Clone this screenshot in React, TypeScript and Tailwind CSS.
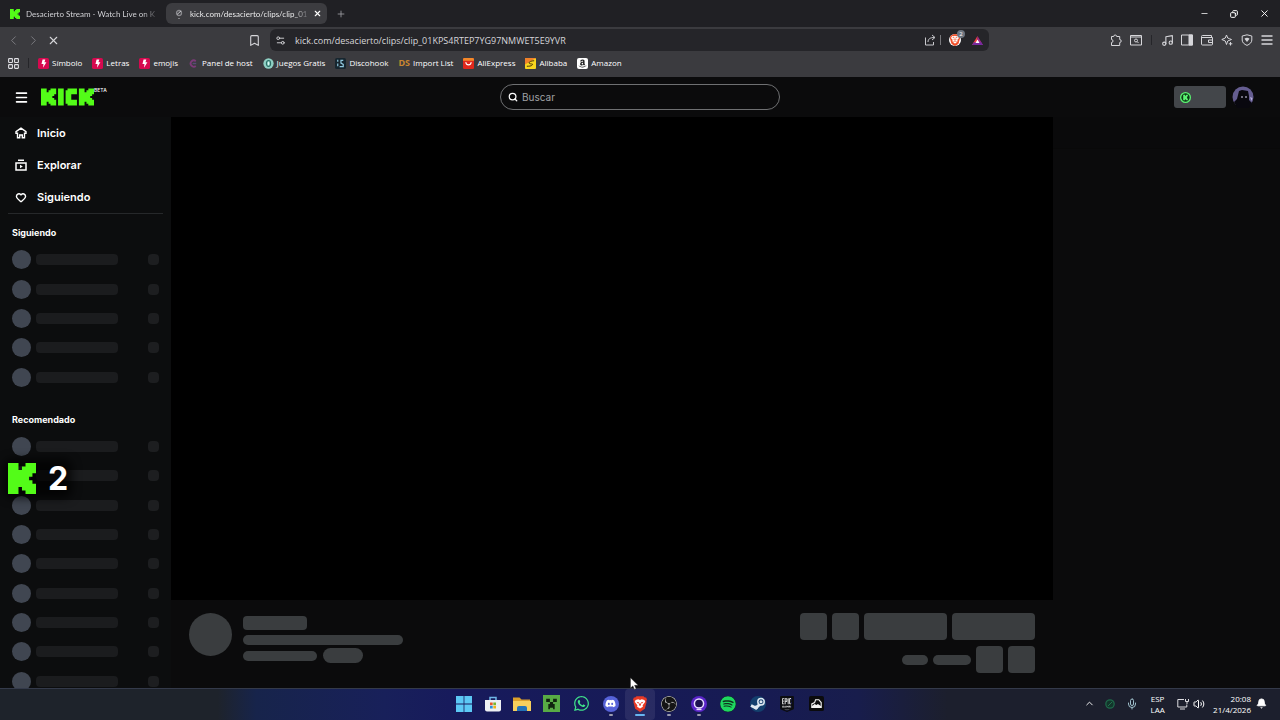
import React from 'react'
import {
    Bell,
    Bookmark,
    ChevronLeft,
    ChevronRight,
    ChevronUp,
    Copy,
    Heart,
    LayoutGrid,
    Menu,
    Mic,
    Minus,
    Music,
    Plus,
    Search,
    Settings2,
    Volume2,
    X,
} from 'lucide-react'
import { FaAmazon, FaDiscord, FaSpotify, FaWhatsapp } from 'react-icons/fa'
import { SiBrave, SiEpicgames, SiObsstudio } from 'react-icons/si'

interface Item {
    label: string
    icon: React.ReactNode
}

interface TaskItem extends Item {
    running?: boolean
    active?: boolean
}

const KickMark = ({ className }: { className: string }) => (
    <svg viewBox="0 0 267 300" preserveAspectRatio="none" className={className}>
        <path
            fill="#53fc18"
            d="M0 0H100V67H133V33H167V0H267V100H233V133H200V167H233V200H267V300H167V267H133V233H100V300H0Z"
        />
    </svg>
)

const KickLogo = () => (
    <svg viewBox="0 0 933 300" className="h-[18px] w-[53px]" fill="#53fc18">
        <path d="M0 0H100V67H133V33H167V0H267V100H233V133H200V167H233V200H267V300H167V267H133V233H100V300H0Z" />
        <path d="M300 0H400V300H300Z" />
        <path d="M433 33H467V0H633V100H533V200H633V300H467V267H433Z" />
        <path d="M667 0H767V67H800V33H833V0H933V100H900V133H867V167H900V200H933V300H833V267H800V233H767V300H667Z" />
    </svg>
)

const BoltIcon = () => (
    <svg viewBox="0 0 12 12" className="size-[11px]">
        <rect width="12" height="12" rx="2" fill="#d6094f" />
        <path d="M5 1.5h3L7 4.6h2.2L5.4 10.6l.6-4H3.8z" fill="#fff" />
    </svg>
)

const bookmarks: Item[] = [
    { label: 'Símbolo', icon: <BoltIcon /> },
    { label: 'Letras', icon: <BoltIcon /> },
    { label: 'emojis', icon: <BoltIcon /> },
    {
        label: 'Panel de host',
        icon: (
            <svg viewBox="0 0 12 12" className="size-[11px]" fill="none">
                <path d="M8.5 3.5A3.4 3.4 0 1 0 8.5 8.7" stroke="#7c3a78" strokeWidth="2" />
                <path d="M5 6h4" stroke="#5a4a78" strokeWidth="1.5" />
            </svg>
        ),
    },
    {
        label: 'Juegos Gratis',
        icon: (
            <svg viewBox="0 0 12 12" className="size-[11px]">
                <circle cx="6" cy="6" r="5.6" fill="#8fd0c4" />
                <ellipse cx="6" cy="6" rx="2.3" ry="3.2" fill="none" stroke="#2b6e66" strokeWidth="1.2" />
                <path d="M6 4.5v3" stroke="#eafffb" />
            </svg>
        ),
    },
    {
        label: 'Discohook',
        icon: (
            <svg viewBox="0 0 12 12" className="size-[11px]" fill="none">
                <rect width="12" height="12" rx="2" fill="#17262f" />
                <path d="M9 2.5H6.5v3L9 7v2.5H5M3 2v2M3 6v3" stroke="#8fc7dd" strokeWidth="1.3" />
            </svg>
        ),
    },
    {
        label: 'Import List',
        icon: <span className="text-[9px] font-bold leading-3 text-[#c98730]">DS</span>,
    },
    {
        label: 'AliExpress',
        icon: (
            <svg viewBox="0 0 12 12" className="size-[11px]">
                <rect width="12" height="12" rx="1.5" fill="#e0281c" />
                <path d="M0 1.5A1.5 1.5 0 0 1 1.5 0h9A1.5 1.5 0 0 1 12 1.5V3H0z" fill="#f4892a" />
                <path d="M3 4.5c.6 4 5.4 4 6 0" fill="none" stroke="#fff" strokeWidth="1.1" />
            </svg>
        ),
    },
    {
        label: 'Alibaba',
        icon: (
            <svg viewBox="0 0 12 12" className="size-[11px]">
                <rect width="12" height="12" rx="1" fill="#f7d51e" />
                <path d="M0 0h12L0 7z" fill="#f0812a" />
                <path d="M10 3C6 3 3 5 5 6s4 0 3 1.5S4 9 2 9" fill="none" stroke="#3a2508" />
            </svg>
        ),
    },
    {
        label: 'Amazon',
        icon: (
            <span className="flex size-[11px] items-center justify-center rounded-[2px] bg-white">
                <FaAmazon className="size-[9px] text-[#232323]" />
            </span>
        ),
    },
]

const navItems: Item[] = [
    {
        label: 'Inicio',
        icon: (
            <svg viewBox="0 0 12 12" className="size-3" fill="none" stroke="#fff" strokeWidth="1.4">
                <path d="M6 1.2L1 4.6v1.6h1.5v4.6h2.2V8h2.6v2.8h2.2V6.2H11V4.6z" />
            </svg>
        ),
    },
    {
        label: 'Explorar',
        icon: (
            <svg viewBox="0 0 12 12" className="size-3" fill="none" stroke="#fff" strokeWidth="1.5">
                <path d="M1 4h10v7H1zM3 1.2h6" />
                <path d="M5 5.8v3.4l2.8-1.7z" fill="#fff" stroke="none" />
            </svg>
        ),
    },
    { label: 'Siguiendo', icon: <Heart className="h-[11px] w-3" strokeWidth={3} /> },
]

const taskItems: TaskItem[] = [
    {
        label: 'Inicio de Windows',
        icon: (
            <svg viewBox="0 0 16 16" className="size-4" fill="#5cc8f5">
                <path d="M0 0h7.6v7.6H0zM8.4 0H16v7.6H8.4zM0 8.4h7.6V16H0zM8.4 8.4H16V16H8.4z" />
            </svg>
        ),
    },
    {
        label: 'Microsoft Store',
        icon: (
            <svg viewBox="0 0 16 16" className="size-4">
                <path d="M5 4V1.5h6V4" fill="none" stroke="#6fb6e8" strokeWidth="1.5" />
                <path d="M0 4h16v9.5a2 2 0 0 1-2 2H2a2 2 0 0 1-2-2z" fill="#eef0f3" />
                <path d="M5 6.5h2.7v2.7H5z" fill="#e8562a" />
                <path d="M8.3 6.5H11v2.7H8.3z" fill="#7ab530" />
                <path d="M5 9.8h2.7v2.7H5z" fill="#2c8fd8" />
                <path d="M8.3 9.8H11v2.7H8.3z" fill="#f0b41c" />
            </svg>
        ),
    },
    {
        label: 'Explorador de archivos',
        icon: (
            <svg viewBox="0 0 18 16" className="h-4 w-[18px]">
                <path d="M0 1.5h6.5l2 2H17V15H0z" fill="#dba02a" />
                <path d="M0 5h18v10H0z" fill="#f6cf5c" />
                <path d="M4 15v-3a2 2 0 0 1 2-2h6a2 2 0 0 1 2 2v3z" fill="#2272b8" />
            </svg>
        ),
    },
    {
        label: 'Minecraft',
        icon: (
            <svg viewBox="0 0 16 16" className="size-[17px]">
                <path d="M0 0h16v16H0z" fill="#58ab45" />
                <path
                    d="M3 3.5h3.5v3H3zM9.5 3.5H13v3H9.5zM6.5 6.5h3v2H11v5H9.5V12h-3v1.5H5v-5h1.5z"
                    fill="#10240f"
                />
            </svg>
        ),
    },
    { label: 'WhatsApp', icon: <FaWhatsapp className="size-[17px] text-[#3fe08a]" /> },
    {
        label: 'Discord',
        running: true,
        icon: (
            <span className="flex size-4 items-center justify-center rounded-full bg-[#5662d8]">
                <FaDiscord className="size-[11px] text-white" />
            </span>
        ),
    },
    {
        label: 'Brave',
        running: true,
        active: true,
        icon: (
            <svg viewBox="0 0 16 18" className="h-4 w-[14px]">
                <path
                    d="M4 0h8l1.5 1.7 1.5-.2 1 2.500-.8 1.500.3 1.500-2 7.500L8 18l-5.500-3.500L.5 7l.3-1.500L0 4l1-2.500 1.500.2z"
                    fill="#e83a26"
                />
                <path d="M3 4.500l3-.8 2 .6 2-.6 3 .8 1 2-3 4 .3 1.500L8 14l-3.300-2 .3-1.500-3-4z" fill="#fff" />
                <path
                    d="M4 6.500l3 .8-1 1.500zM12 6.500l-3 .8 1 1.500zM7.300 8h1.400l.5 2.500L8 11l-1.200-.5z"
                    fill="#e83a26"
                />
            </svg>
        ),
    },
    {
        label: 'OBS Studio',
        running: true,
        icon: <SiObsstudio className="size-4 rounded-full bg-[#151515] text-[#c9c9c9]" />,
    },
    {
        label: 'Grabador',
        running: true,
        icon: (
            <svg viewBox="0 0 16 16" className="size-4" fill="none">
                <circle cx="8" cy="8" r="8" fill="#5a24c8" />
                <circle cx="8" cy="7.5" r="4.6" fill="#1b1150" stroke="#e6dcff" strokeWidth="1.5" />
                <path d="M5.5 13.5h5" stroke="#e6dcff" strokeWidth="1.3" />
            </svg>
        ),
    },
    {
        label: 'Spotify',
        icon: <FaSpotify className="size-4 rounded-full bg-[#10331d] text-[#1ed760]" />,
    },
    {
        label: 'Steam',
        icon: (
            <svg viewBox="0 0 16 16" className="size-4">
                <circle cx="8" cy="8" r="8" fill="#14406e" />
                <path d="M1 9.5l5 2.5 5-5" fill="none" stroke="#dfe9f2" strokeWidth="3" />
                <circle cx="11" cy="5.8" r="3.2" fill="#14406e" stroke="#dfe9f2" strokeWidth="1.5" />
                <circle cx="11" cy="5.8" r="1.5" fill="#dfe9f2" />
                <circle cx="6" cy="11.5" r="2" fill="#dfe9f2" />
            </svg>
        ),
    },
    {
        label: 'Epic Games',
        icon: (
            <span className="flex h-3 w-[9px] items-center justify-center bg-[#e4e4e4]">
                <SiEpicgames className="size-4 shrink-0 text-[#0c0d10]" />
            </span>
        ),
    },
    {
        label: 'Launcher',
        icon: (
            <svg viewBox="0 0 16 16" className="size-[15px]" fill="none">
                <rect width="16" height="16" rx="2" fill="#0b0b0d" />
                <path d="M3 12.2V8.500L6 7l1-3h3.500L13 7v5.200z" stroke="#f2f2f2" strokeWidth="1.2" />
                <path d="M3 12.500V11l3-2.500 2 1 1.500-1L13 11v1.500z" fill="#f2f2f2" />
            </svg>
        ),
    },
]

const IconButton = ({
    label,
    children,
    className = '',
}: {
    label: string
    children: React.ReactNode
    className?: string
}) => (
    <button
        type="button"
        aria-label={label}
        className={`flex h-5 w-5 shrink-0 items-center justify-center ${className}`}
    >
        {children}
    </button>
)

const TabStrip = () => (
    <div className="flex h-[27px] shrink-0 items-center bg-[#202024]">
        <div className="flex w-[160px] items-center gap-[6px] pl-[10px]">
            <KickMark className="h-[10px] w-[10px] shrink-0" />
            <span className="whitespace-nowrap bg-linear-to-r from-[#e0e0e4] from-90% to-[#55555a] bg-clip-text font-[Lato,sans-serif] text-[8px] leading-3 text-transparent">
                Desacierto Stream - Watch Live on K
            </span>
        </div>
        <div className="ml-[6px] flex h-[21px] w-[161px] items-center rounded-md bg-[#3c3c40] pl-2">
            <svg viewBox="0 0 10 12" className="h-3 w-[10px] shrink-0" fill="none">
                <circle cx="5" cy="5" r="2.5" stroke="#8a8a8e" strokeWidth="1.3" />
                <path d="M3 6.5L7 3M4.5 10.5h1" stroke="#c4c4c8" />
            </svg>
            <span className="ml-[6px] whitespace-nowrap bg-linear-to-r from-white from-90% to-[#66666a] bg-clip-text font-[Lato,sans-serif] text-[8px] leading-3 text-transparent">
                kick.com/desacierto/clips/clip_01
            </span>
            <IconButton label="Cerrar pestaña" className="ml-auto">
                <X className="size-[9px]" strokeWidth={3} />
            </IconButton>
        </div>
        <IconButton label="Nueva pestaña" className="ml-1 text-[#a0a0a4]">
            <Plus className="size-[10px]" />
        </IconButton>
        <div className="ml-auto flex gap-[10px] pr-[6px]">
            <IconButton label="Minimizar">
                <Minus className="size-[9px]" />
            </IconButton>
            <IconButton label="Restaurar">
                <Copy className="size-[8px] rotate-90" strokeWidth={3} />
            </IconButton>
            <IconButton label="Cerrar">
                <X className="size-[11px]" />
            </IconButton>
        </div>
    </div>
)

const Toolbar = () => (
    <div className="flex h-[26px] shrink-0 items-center text-[#d6d6da]">
        <div className="flex w-[270px] shrink-0 pl-[3px] pr-[6px]">
            <IconButton label="Atrás" className="text-[#7d7d82]">
                <ChevronLeft className="size-[15px]" strokeWidth={1.5} />
            </IconButton>
            <IconButton label="Adelante" className="text-[#7d7d82]">
                <ChevronRight className="size-[15px]" strokeWidth={1.5} />
            </IconButton>
            <IconButton label="Detener">
                <X className="size-[13px]" />
            </IconButton>
            <IconButton label="Guardar marcador" className="ml-auto">
                <Bookmark className="size-[13px]" />
            </IconButton>
        </div>
        <div className="flex h-[22px] min-w-0 flex-1 items-center rounded-md bg-[#252529] pr-[2px]">
            <IconButton label="Información del sitio">
                <Settings2 className="size-[11px]" />
            </IconButton>
            <input
                type="text"
                aria-label="Dirección"
                defaultValue="kick.com/desacierto/clips/clip_01KPS4RTEP7YG97NMWET5E9YVR"
                className="ml-[5px] h-5 min-w-0 flex-1 bg-transparent text-[9px] outline-none"
            />
            <IconButton label="Compartir">
                <svg viewBox="0 0 12 12" className="size-3" fill="none" stroke="#c8c8cc">
                    <path d="M1.5 3.500v7.500h8V8M4 8c0-3 2-4.500 6.500-4.500M8 1l3 2.500L8 6" />
                </svg>
            </IconButton>
            <span className="h-[10px] w-px bg-[#77777b]" />
            <button
                type="button"
                aria-label="Brave Shields"
                className="relative ml-1 flex size-5 items-center justify-center"
            >
                <SiBrave className="size-3 rounded-full bg-white text-[#f0502a]" />
                <span className="absolute right-0 top-0 size-2 rounded-full bg-[#6d7580] text-center text-[6px] leading-2 text-white">
                    2
                </span>
            </button>
            <IconButton label="Brave Rewards" className="ml-[2px]">
                <svg viewBox="0 0 12 12" className="size-[11px]">
                    <path d="M6 1L0 11h6z" fill="#f0413f" />
                    <path d="M6 1l6 10H6z" fill="#a3268f" />
                    <path d="M0 11h12L10 8H2z" fill="#762a9e" />
                    <path d="M6 5L3.8 8.800h4.400z" fill="#fff" />
                </svg>
            </IconButton>
        </div>
        <div className="flex w-[291px] shrink-0 items-center justify-end pr-[3px]">
            <IconButton label="Extensiones">
                <svg viewBox="0 0 12 12" className="size-3" fill="none" stroke="currentColor">
                    <path d="M1.500 2.500h2.200a1.500 1.500 0 0 1 3 0h3v3a1.500 1.500 0 0 1 0 3V11.500H1.500v-3a1.500 1.500 0 0 0 0-3z" />
                </svg>
            </IconButton>
            <IconButton label="Buscar pestañas">
                <svg viewBox="0 0 12 12" className="size-3" fill="none" stroke="currentColor">
                    <path d="M.5 1.500h11v9.500H.5zM.5 3h11" />
                    <circle cx="6" cy="6.5" r="1.5" />
                    <path d="M7 7.500l1.500 1.500" />
                </svg>
            </IconButton>
            <span className="mx-[5px] h-[10px] w-px bg-[#252529]" />
            <IconButton label="Medios">
                <Music className="size-[13px]" />
            </IconButton>
            <IconButton label="Barra lateral">
                <svg viewBox="0 0 12 12" className="size-3" fill="none" stroke="currentColor">
                    <path d="M.5 1h11v10H.5z" />
                    <path d="M8 1h3.500v10H8z" fill="currentColor" />
                </svg>
            </IconButton>
            <IconButton label="Cartera">
                <svg viewBox="0 0 12 12" className="size-3" fill="none" stroke="currentColor">
                    <path d="M10.500 3.500v-2h-9a1 1 0 0 0-1 1V10a1 1 0 0 0 1 1h9a1 1 0 0 0 1-1V3.500H.5M11.500 6h-4v2.500h4" />
                </svg>
            </IconButton>
            <IconButton label="Leo">
                <svg viewBox="0 0 12 12" className="size-3" fill="none" stroke="currentColor">
                    <path d="M8.500 4.700L6.700 4 5.500 1 4.300 4 .8 5.500 4.300 7l1.200 3.500L6.700 7l3.800-1.500zM9.500 8v3.500M7.800 9.800h3.500" />
                </svg>
            </IconButton>
            <IconButton label="VPN">
                <svg viewBox="0 0 12 12" className="size-3" fill="none" stroke="currentColor">
                    <path d="M6 .8L10.800 2v4c0 2.500-2 4.200-4.800 5.400C3.200 10.200 1.200 8.500 1.200 6V2z" />
                    <path d="M3.500 4.800c1.500-1.300 3.500-1.300 5 0L6 8z" fill="currentColor" stroke="none" />
                </svg>
            </IconButton>
            <IconButton label="Menú">
                <svg viewBox="0 0 12 12" className="size-3" stroke="currentColor" strokeWidth="1.5">
                    <path d="M.5 2h11M.5 6h11M.5 10h11" />
                </svg>
            </IconButton>
        </div>
    </div>
)

const BookmarksBar = () => (
    <div className="flex h-[24px] shrink-0 items-center pb-1 pl-[7px]">
        <button type="button" aria-label="Grupos de pestañas">
            <LayoutGrid className="size-[13px] text-[#e0e0e4]" />
        </button>
        <span className="ml-2 mr-[9px] h-[10px] w-px bg-[#252529]" />
        <nav className="flex gap-[10px]">
            {bookmarks.map(({ label, icon }) => (
                <a
                    key={label}
                    href="#"
                    className="flex items-center gap-[3px] whitespace-nowrap text-[8px] leading-3 text-white"
                >
                    {icon}
                    {label}
                </a>
            ))}
        </nav>
    </div>
)

const Header = () => (
    <header className="grid h-10 shrink-0 grid-cols-[1fr_280px_1fr] items-center">
        <div className="flex items-center pl-[11px]">
            <IconButton label="Abrir menú">
                <Menu className="size-[15px]" strokeWidth={2.5} />
            </IconButton>
            <a href="#" aria-label="Kick" className="ml-[10px] flex items-start">
                <KickLogo />
                <span className="text-[5px] font-medium leading-[5px]">BETA</span>
            </a>
        </div>
        <label className="flex h-[26px] items-center gap-1 rounded-full border border-[#6f7072] px-[7px]">
            <Search className="size-[10px]" strokeWidth={3} />
            <input
                type="text"
                aria-label="Buscar"
                placeholder="Buscar"
                className="min-w-0 flex-1 bg-transparent text-[10px] placeholder-[#a0a2a5] outline-none"
            />
        </label>
        <div className="flex items-center justify-end gap-[6px] pr-[26px]">
            <button
                type="button"
                aria-label="KICKs"
                className="flex h-[22px] w-[52px] items-center rounded-[3px] bg-[#43464a] pl-[6px]"
            >
                <svg viewBox="0 0 12 12" className="size-[11px]">
                    <circle cx="6" cy="6" r="5.3" fill="#0d3b16" stroke="#5bf572" strokeWidth="1.4" />
                    <path d="M3.500 3h2v1.500L7 3h2L7.500 6 9 9H7L5.500 7.500V9h-2z" fill="#5bf572" />
                </svg>
            </button>
            <button type="button" aria-label="Perfil">
                <svg viewBox="0 0 22 22" className="size-[22px]">
                    <circle cx="11" cy="11" r="10.5" fill="#655d90" />
                    <path
                        d="M6 9l1-4 3-1 3 .5 3 .5 1 5v4l3 3-3 4.500a10.500 10.500 0 0 1-12 0L2 16l3-3z"
                        fill="#09080f"
                    />
                    <path d="M9 11h2M13 11h2" stroke="#d8d4f0" strokeWidth="1.2" />
                    <path d="M18 11l2.500 1-1 3z" fill="#b9b2de" />
                </svg>
            </button>
        </div>
    </header>
)

const ChannelSkeletons = ({ count, className }: { count: number; className: string }) => (
    <ul className={`grid shrink-0 auto-rows-fr ${className}`}>
        {Array.from({ length: count }, (_, i) => (
            <li key={i} className="flex items-center px-3">
                <span className="size-[19px] rounded-full bg-[#404651]" />
                <span className="ml-[5px] h-[11px] w-[82px] rounded bg-[#1b1c1e]" />
                <span className="ml-auto size-[11px] rounded bg-[#1d1e20]" />
            </li>
        ))}
    </ul>
)

const Sidebar = () => (
    <aside className="flex w-[171px] shrink-0 flex-col overflow-hidden bg-[#0c0d0e]">
        <nav>
            {navItems.map(({ label, icon }) => (
                <a
                    key={label}
                    href="#"
                    className="flex h-8 items-center gap-[10px] pl-[15px] text-[11px] font-semibold"
                >
                    {icon}
                    {label}
                </a>
            ))}
        </nav>
        <hr className="mx-2 mb-[7px] border-[#26282a]" />
        <h2 className="h-6 shrink-0 pl-3 text-[9px] font-bold leading-6">Siguiendo</h2>
        <ChannelSkeletons count={5} className="h-[147px]" />
        <h2 className="mt-4 h-6 shrink-0 pl-3 text-[9px] font-bold leading-6">Recomendado</h2>
        <ChannelSkeletons count={9} className="h-[264px]" />
    </aside>
)

const ClipInfo = () => (
    <div className="flex h-[88px] shrink-0 justify-between px-[18px] pt-[13px]">
        <div className="flex gap-[11px]">
            <span className="size-[43px] rounded-full bg-[#3a3d3f]" />
            <div className="flex flex-col pt-[3px]">
                <span className="h-[14px] w-16 rounded bg-[#3a3d3f]" />
                <span className="mt-[5px] h-[10px] w-40 rounded-full bg-[#3a3d3f]" />
                <div className="mt-[3px] flex items-center gap-[6px]">
                    <span className="h-[10px] w-[74px] rounded-full bg-[#3a3d3f]" />
                    <span className="h-[15px] w-10 rounded-full bg-[#3a3d3f]" />
                </div>
            </div>
        </div>
        <div className="flex flex-col items-end gap-[6px]">
            <div className="flex gap-[5px]">
                <span className="size-[27px] rounded bg-[#3a3d3f]" />
                <span className="size-[27px] rounded bg-[#3a3d3f]" />
                <span className="h-[27px] w-[83px] rounded bg-[#3a3d3f]" />
                <span className="h-[27px] w-[83px] rounded bg-[#3a3d3f]" />
            </div>
            <div className="flex items-center gap-[5px]">
                <span className="h-[10px] w-[26px] rounded-full bg-[#3a3d3f]" />
                <span className="h-[10px] w-[38px] rounded-full bg-[#3a3d3f]" />
                <span className="size-[27px] rounded bg-[#3a3d3f]" />
                <span className="size-[27px] rounded bg-[#3a3d3f]" />
            </div>
        </div>
    </div>
)

const Taskbar = () => (
    <footer className="grid h-8 shrink-0 grid-cols-[1fr_382px_1fr] border-t border-[#343a4a] bg-[linear-gradient(90deg,#1e232b_17%,#17244b_20%,#18205a_30%,#171a5c_36%,#171b52_60%,#181d4c_67%,#1c1f2d_74%)]">
        <div />
        <div className="grid grid-cols-13">
            {taskItems.map(({ label, icon, running, active }) => (
                <button
                    key={label}
                    type="button"
                    aria-label={label}
                    className={`relative flex items-center justify-center rounded pb-[2px] ${active ? 'bg-white/8' : ''}`}
                >
                    {icon}
                    {running && (
                        <span
                            className={`absolute bottom-1 h-[2px] rounded-full ${
                                active ? 'w-[10px] bg-[#67b5f0]' : 'w-1 bg-[#9a9bb0]'
                            }`}
                        />
                    )}
                </button>
            ))}
        </div>
        <div className="flex items-center justify-end pb-[2px] pr-[13px] text-[8px] leading-[11px]">
            <IconButton label="Mostrar iconos ocultos">
                <ChevronUp className="size-[11px]" />
            </IconButton>
            <svg viewBox="0 0 12 12" className="ml-[6px] size-[10px]" fill="none">
                <circle cx="6" cy="6" r="5" fill="#12352b" stroke="#1f6a4a" strokeWidth="1.5" />
                <path d="M3.5 8.500l5-5" stroke="#2a7d58" />
            </svg>
            <Mic className="ml-[11px] size-3 text-[#9fc0cc]" />
            <div className="ml-3 w-[15px] text-center">
                <p>ESP</p>
                <p>LAA</p>
            </div>
            <svg viewBox="0 0 12 12" className="ml-3 size-3" fill="none" stroke="#dcdce0">
                <path d="M7 1.500H.8v7.500h9V6.500M3 11h5M8.500 1v2.500h3V1M10 3.500V6" />
            </svg>
            <Volume2 className="ml-[4px] size-3" />
            <div className="ml-2 text-right">
                <p>20:08</p>
                <p>21/4/2026</p>
            </div>
            <Bell className="ml-[5px] size-[11px]" fill="currentColor" />
        </div>
    </footer>
)

const App: React.FC = () => {
    return (
        <div className="relative flex h-screen flex-col overflow-hidden bg-[#0b0b0c] font-['Open_Sans','Noto_Sans',sans-serif] text-white">
            <TabStrip />
            <div className="shrink-0 bg-[#3b3b3f]">
                <Toolbar />
                <BookmarksBar />
            </div>
            <div className="flex min-h-0 flex-1 flex-col font-[Inter,sans-serif]">
                <Header />
                <div className="flex min-h-0 flex-1">
                    <Sidebar />
                    <main className="flex min-w-0 flex-1 flex-col">
                        <div className="flex-1 bg-black" />
                        <ClipInfo />
                    </main>
                    <aside className="w-[227px] shrink-0 bg-[#0b0b0c]">
                        <div className="h-8 border-b border-[#090909] bg-[#0a0a0b]" />
                    </aside>
                </div>
            </div>
            <Taskbar />

            {/* viewer counter overlay */}
            <div className="absolute left-2 top-[463px] flex items-center gap-3 font-[Inter,sans-serif]">
                <div className="absolute -inset-1 rounded-lg bg-black/70 blur-[5px]" />
                <KickMark className="relative h-[31px] w-7" />
                <span className="relative text-[32px] font-bold leading-[30px]">2</span>
            </div>

            <svg viewBox="0 0 10 15" className="absolute left-[630px] top-[677px] h-[14px] w-[9px]">
                <path
                    d="M.5.5v11.500l2.700-2.400 1.800 4 1.800-.8-1.700-3.800h3.900z"
                    fill="#fff"
                    stroke="#222"
                    strokeWidth=".5"
                />
            </svg>
        </div>
    )
}

export default App
